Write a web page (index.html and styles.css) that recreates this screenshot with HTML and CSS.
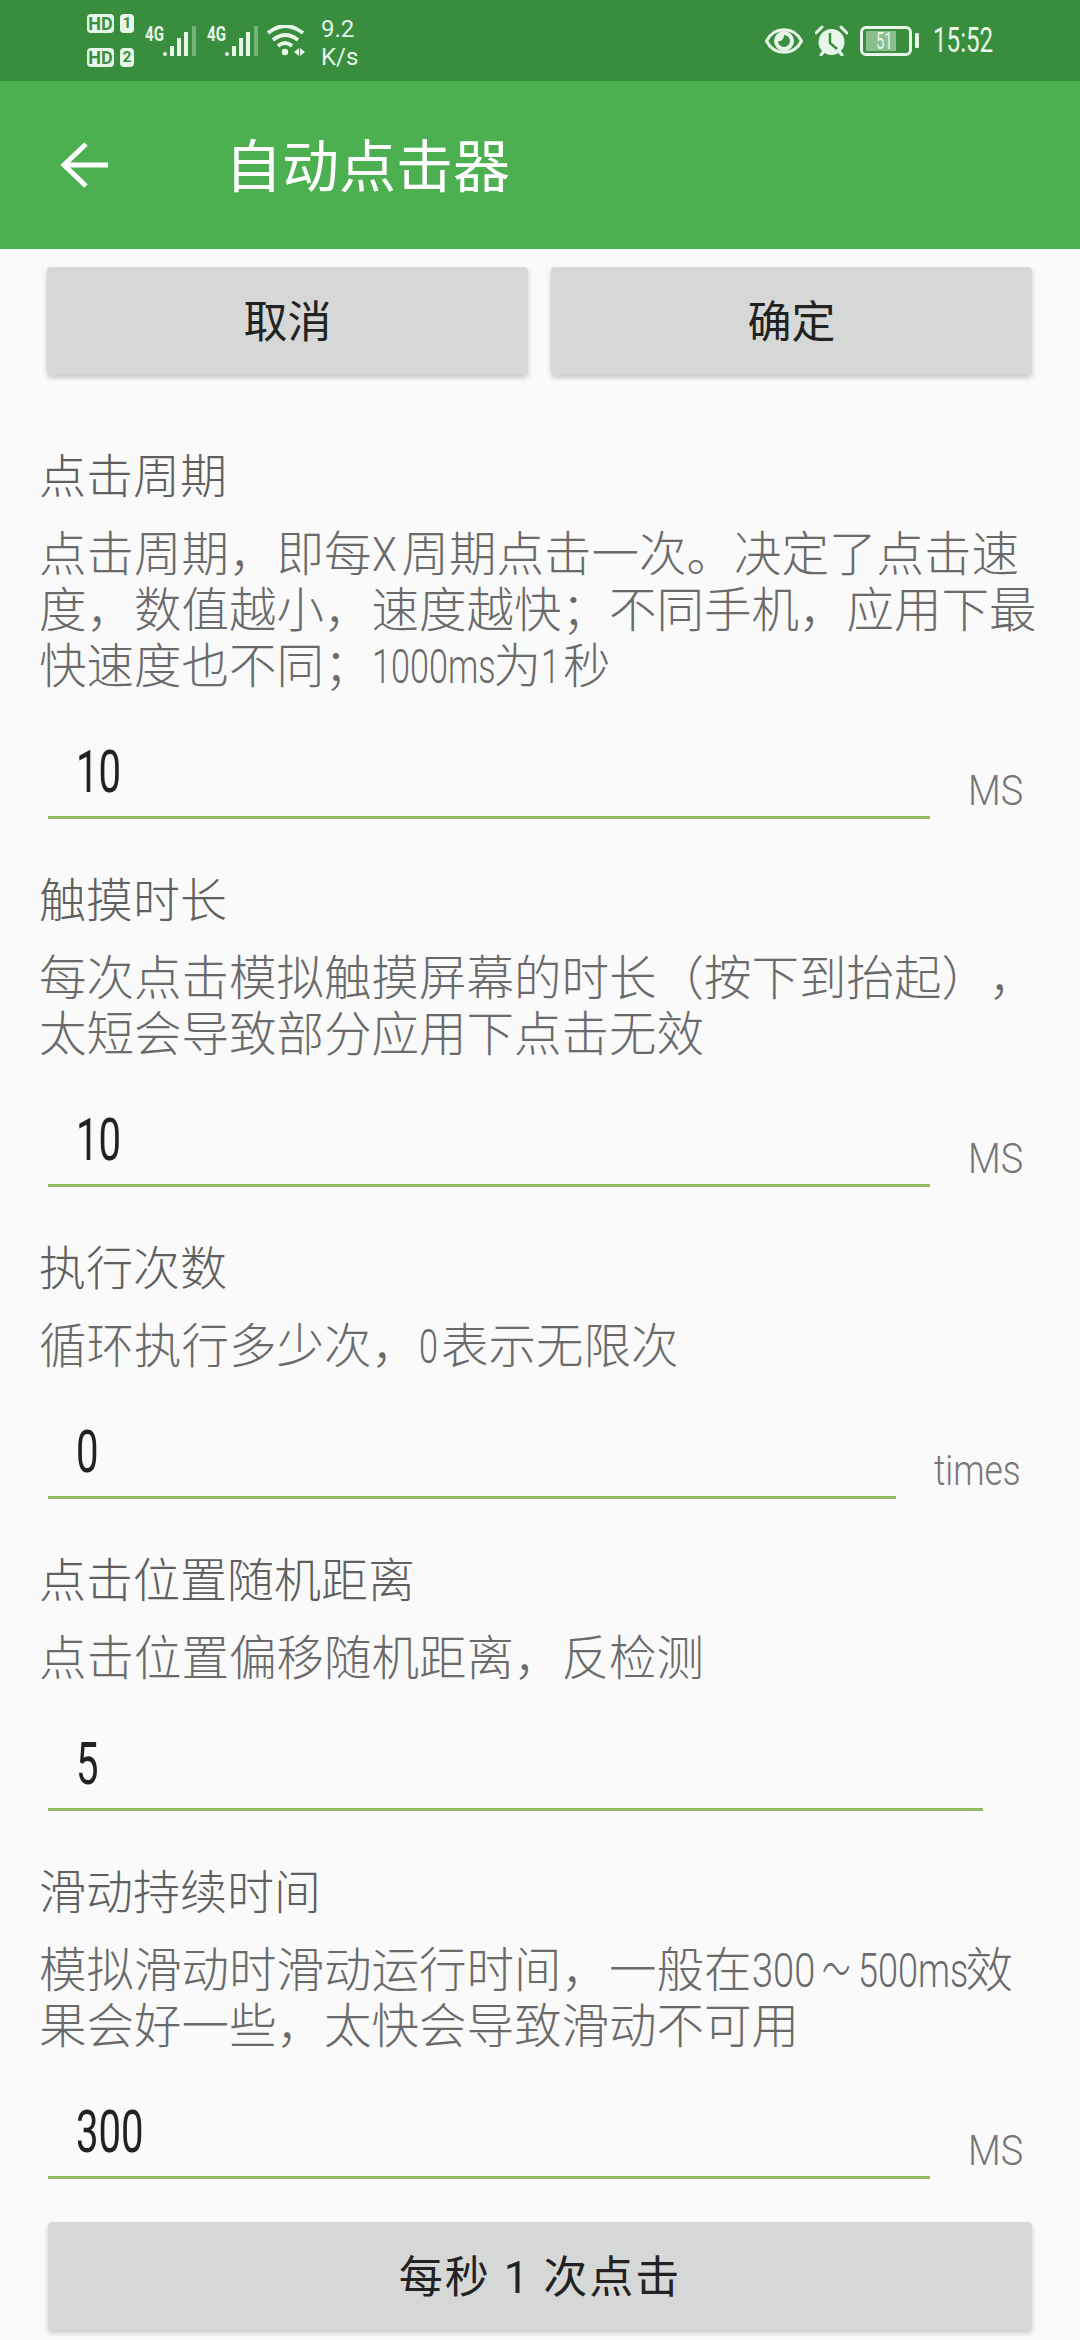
FILE: index.html
```html
<!DOCTYPE html>
<html lang="zh">
  <head>
    <meta charset="UTF-8" />
    <title>自动点击器</title>
    <link rel="stylesheet" href="styles.css">
  </head>

  <body>
    <div class="status-bar">
      <div class="status-left">
        <div class="sims">
          <div class="sim-row"><span class="hd">HD</span><span class="sim">1</span></div>
          <div class="sim-row"><span class="hd">HD</span><span class="sim">2</span></div>
        </div>
        <div class="signal">
          <span class="net">4G</span>
          <svg width="33" height="30" viewBox="0 0 33 30" fill="#e8f5e9">
            <rect x="0" y="26" width="4" height="4" rx="2" />
            <rect x="7" y="20" width="4" height="10" />
            <rect x="14" y="12" width="4" height="18" />
            <rect x="21" y="6" width="4" height="24" />
            <rect x="29" y="0" width="4" height="30" opacity="0.35" />
          </svg>
        </div>
        <div class="signal">
          <span class="net">4G</span>
          <svg width="33" height="30" viewBox="0 0 33 30" fill="#e8f5e9">
            <rect x="0" y="26" width="4" height="4" rx="2" />
            <rect x="7" y="20" width="4" height="10" />
            <rect x="14" y="12" width="4" height="18" />
            <rect x="21" y="6" width="4" height="24" />
            <rect x="29" y="0" width="4" height="30" opacity="0.35" />
          </svg>
        </div>
        <svg class="wifi" width="38" height="31" viewBox="0 0 38 31" fill="none" stroke="#e8f5e9" stroke-width="3.800">
          <path d="M1 8 Q18 -6 36 8" />
          <path d="M6 15 Q18 5 31 15" />
          <path d="M11 21 Q18 15 25 21" />
          <circle cx="18" cy="27" r="3.200" fill="#e8f5e9" stroke="none" />
          <path d="M32 23 L27 27 L32 31 Z M33 23 L38 27 L33 31 Z" fill="#e8f5e9" stroke="none" />
        </svg>
        <div class="speed">9.2<br>K/s</div>
      </div>
      <div class="status-right">
        <svg width="38" height="26" viewBox="0 0 38 26">
          <path d="M1.500 13 C9 -2 29 -2 36.500 13 C29 28 9 28 1.500 13 Z" fill="none" stroke="#e8f5e9" stroke-width="3" />
          <circle cx="19" cy="13" r="10" fill="#e8f5e9" />
          <path d="M19 7 A6 6 0 1 1 13 13 C16 14 19 11 19 7 Z" fill="#388e3c" />
        </svg>
        <svg width="33" height="31" viewBox="0 0 33 31">
          <circle cx="16.500" cy="17" r="13" fill="#e8f5e9" />
          <path d="M15 8 V18 L22 24" fill="none" stroke="#388e3c" stroke-width="2.500" />
          <path d="M1 8 L7 2 M26 2 L32 8" stroke="#e8f5e9" stroke-width="3" stroke-linecap="round" />
          <path d="M6 30 L9 26 M27 30 L24 26" stroke="#e8f5e9" stroke-width="3" stroke-linecap="round" />
        </svg>
        <div class="battery">
          <div class="battery-body"><div class="battery-fill"></div><span class="battery-num">51</span></div>
          <div class="battery-nub"></div>
        </div>
        <span class="clock">15:52</span>
      </div>
    </div>

    <div class="app-bar">
      <svg class="back" width="48" height="46" viewBox="0 0 48 46" fill="none" stroke="#fff" stroke-width="5">
        <path d="M48 23 H4" />
        <path d="M26 2 L4 23 L26 44" />
      </svg>
      <div class="app-title">自动点击器</div>
    </div>

    <div class="actions">
      <div class="btn">取消</div>
      <div class="btn">确定</div>
    </div>

    <div class="setting">
      <div class="setting-title">点击周期</div>
      <div class="setting-desc">点击周期，即每<span class="narrow w-x">X</span>周期点击一次。决定了点击速<br>度，数值越小，速度越快；不同手机，应用下最<br>快速度也不同；<span class="narrow w-1000">1000ms</span>为<span class="narrow w-digit">1</span>秒</div>
      <div class="field">
        <div class="input"><span class="value">10</span></div>
        <div class="unit">MS</div>
      </div>
    </div>

    <div class="setting">
      <div class="setting-title">触摸时长</div>
      <div class="setting-desc">每次点击模拟触摸屏幕的时长（按下到抬起），<br>太短会导致部分应用下点击无效</div>
      <div class="field">
        <div class="input"><span class="value">10</span></div>
        <div class="unit">MS</div>
      </div>
    </div>

    <div class="setting">
      <div class="setting-title">执行次数</div>
      <div class="setting-desc">循环执行多少次，<span class="narrow w-digit">0</span>表示无限次</div>
      <div class="field">
        <div class="input"><span class="value">0</span></div>
        <div class="unit unit-times">times</div>
      </div>
    </div>

    <div class="setting">
      <div class="setting-title">点击位置随机距离</div>
      <div class="setting-desc">点击位置偏移随机距离，反检测</div>
      <div class="field field-plain">
        <div class="input"><span class="value">5</span></div>
      </div>
    </div>

    <div class="setting">
      <div class="setting-title">滑动持续时间</div>
      <div class="setting-desc">模拟滑动时滑动运行时间，一般在<span class="narrow w-300">300</span><span class="narrow w-tilde">～</span><span class="narrow w-500">500ms</span>效<br>果会好一些，太快会导致滑动不可用</div>
      <div class="field">
        <div class="input"><span class="value">300</span></div>
        <div class="unit">MS</div>
      </div>
    </div>

    <div class="btn btn-wide">每秒 1 次点击</div>
  </body>
</html>
```

FILE: styles.css
```css
* {
  box-sizing: border-box;
}

body {
  margin: 0;
  height: 2340px;
  overflow: hidden;
  background: #fafafa;
  font-family: Roboto, "Noto Sans CJK SC", sans-serif;
  text-spacing-trim: space-all;
}

.status-bar {
  height: 81px;
  background: #388e3c;
  color: #e8f5e9;
  display: flex;
  align-items: center;
  justify-content: space-between;
  padding: 0 87px;
}

.status-left,
.status-right {
  display: flex;
  align-items: center;
}

.sims {
  display: flex;
  flex-direction: column;
  gap: 15px;
}

.sim-row {
  display: flex;
  gap: 6px;
}

.hd,
.sim {
  height: 19px;
  background: #e8f5e9;
  color: #388e3c;
  border-radius: 4px;
  font-size: 18px;
  font-weight: 700;
  line-height: 19px;
  text-align: center;
}

.hd {
  width: 27px;
}

.sim {
  width: 14px;
  font-size: 15px;
}

.signal {
  display: flex;
  margin-left: 11px;
  height: 30px;
}

.net {
  width: 18px;
  font-size: 21px;
  font-weight: 700;
  line-height: 16px;
  transform: scaleX(0.72);
  transform-origin: left;
}

.wifi {
  margin-left: 9px;
}

.speed {
  margin-left: 16px;
  margin-top: 4px;
  font-size: 24px;
  line-height: 28px;
}

.status-right {
  gap: 12px;
}

.battery {
  display: flex;
  align-items: center;
  gap: 3px;
}

.battery-body {
  position: relative;
  width: 52px;
  height: 30px;
  border: 3px solid #e8f5e9;
  border-radius: 6px;
  padding: 2px 3px;
}

.battery-fill {
  width: 30px;
  height: 100%;
  background: #8bbf8d;
}

.battery-num {
  position: absolute;
  left: 13px;
  top: 0;
  font-size: 24px;
  line-height: 24px;
  transform: scaleX(0.62);
  transform-origin: left;
}

.battery-nub {
  width: 4px;
  height: 15px;
  background: #e8f5e9;
  border-radius: 1px;
}

.clock {
  width: 60px;
  margin-left: 2px;
  font-size: 35px;
  white-space: nowrap;
  transform: scaleX(0.69);
  transform-origin: left;
}

.app-bar {
  height: 168px;
  background: #4caf50;
  display: flex;
  align-items: center;
  padding-left: 60px;
}

.app-title {
  margin-left: 117px;
  margin-bottom: 7px;
  color: #fff;
  font-size: 57px;
}

.actions {
  display: flex;
  gap: 23px;
  padding: 18px 48px 0 47px;
}

.btn {
  flex: 1;
  height: 108px;
  padding-bottom: 4px;
  background: #d6d8d7;
  border-radius: 4px;
  box-shadow: 0 3px 5px rgba(0, 0, 0, 0.2);
  color: #222;
  font-size: 44px;
  display: flex;
  align-items: center;
  justify-content: center;
}

.btn-wide {
  margin: 43px 48px 0;
  letter-spacing: 2px;
}

.setting {
  padding-left: 39px;
  margin-top: 49px;
}

.actions + .setting {
  margin-top: 69px;
}

.setting-title {
  height: 60px;
  line-height: 65px;
  color: #5f5f5f;
  font-size: 47px;
  font-weight: 300;
}

.setting-desc {
  margin-top: 23px;
  color: #6a6a6a;
  font-size: 47.500px;
  font-weight: 300;
  line-height: 56px;
  white-space: nowrap;
}

/* the latin bits in the description are much narrower than the font we have */
.narrow {
  display: inline-block;
  line-height: 1;
  white-space: nowrap;
  transform: scaleX(0.72);
  transform-origin: left;
}

.w-x {
  width: 30px;
  transform: scaleX(0.85);
}

.w-digit {
  width: 22px;
}

.w-1000 {
  width: 122px;
}

.w-300 {
  width: 70px;
  transform: scaleX(0.8);
}

.w-tilde {
  width: 36px;
  transform: scaleX(0.6);
}

.w-500 {
  width: 108px;
  transform: scaleX(0.76);
}

.field {
  display: flex;
  align-items: flex-end;
  gap: 38px;
  margin-left: 9px;
  padding-right: 60px;
  margin-top: 38px;
}

.field-plain {
  padding-right: 97px;
}

.input {
  flex: 1;
  height: 86px;
  border-bottom: 3px solid #8fbc63;
  padding-left: 28px;
  color: #222;
  font-size: 59px;
  line-height: 78px;
}

.value {
  display: inline-block;
  transform: scaleX(0.68);
  transform-origin: left;
}

.unit {
  width: 52px;
  margin-bottom: -1px;
  color: #777;
  font-size: 43px;
  font-weight: 300;
  line-height: 60px;
  white-space: nowrap;
  transform: scaleX(0.88);
  transform-origin: left;
}

.unit-times {
  width: 86px;
  transform: scaleX(0.82);
}
```
